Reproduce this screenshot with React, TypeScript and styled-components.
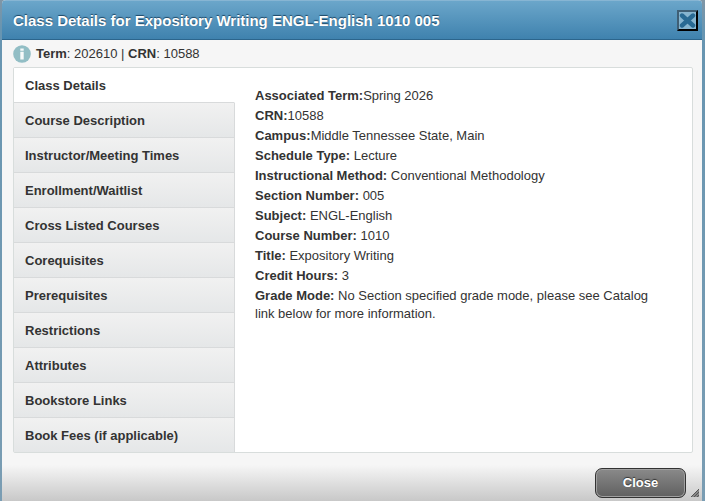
import React, { useState } from "react";
import styled, { createGlobalStyle } from "styled-components";

const GlobalStyle = createGlobalStyle`
  *, *::before, *::after { box-sizing: border-box; }
  html, body, #root { height: 100%; }
  body {
    margin: 0;
    background: #fff;
    color: #333;
    font: 13px/18px "Liberation Sans", Arial, sans-serif;
  }
`;

const Backdrop = styled.div`
  display: flex;
  min-height: 100%;
  margin-right: 1px;
  padding: 0 3px 0 2px;
  background: linear-gradient(#8096a6, #6795b1 30px, #7a9db3);
`;

const Dialog = styled.section`
  display: flex;
  flex: 1;
  flex-direction: column;
  min-width: 0;
  border-radius: 4px 4px 0 0;
  overflow: hidden;
  background: #f6f6f6;
`;

const TitleBar = styled.header`
  display: flex;
  align-items: center;
  justify-content: space-between;
  height: 40px;
  padding: 0 4px 0 11px;
  border-top: 1px solid #87b5d3;
  border-bottom: 1px solid #2c658c;
  background: linear-gradient(#6ba6ca, #3f82ae);
`;

const Title = styled.h1`
  margin: 0;
  padding-top: 2px;
  color: #fff;
  font-size: 15px;
  line-height: 18px;
  text-shadow: 0 -1px 1px #1d4664;
`;

const DismissButton = styled.button`
  display: flex;
  width: 21px;
  height: 21px;
  padding: 0;
  border: 2px solid;
  border-color: #3f5f75 #000 #000 #3f5f75;
  background: #86b5d0;
  cursor: pointer;
`;

const InfoRow = styled.div`
  display: flex;
  align-items: center;
  gap: 5px;
  height: 27px;
  padding: 0 11px;
`;

const Panel = styled.div`
  display: flex;
  margin: 0 9px 0 11px;
  border: 1px solid #d8dddc;
  border-radius: 2px;
  background: #fff;
`;

const TabList = styled.div`
  display: flex;
  flex: 0 0 221px;
  flex-direction: column;
`;

const Tab = styled.button<{ $active: boolean }>`
  height: 35px;
  padding: 2px 11px 0;
  border: 0 solid #d8dadb;
  border-width: 0 1px 1px 0;
  border-right-color: ${(p) => (p.$active ? "transparent" : "#d8dadb")};
  background: ${(p) => (p.$active ? "#fff" : "linear-gradient(#f1f1f1, #e5e7e8)")};
  color: #333;
  font: bold 13px/18px "Liberation Sans", Arial, sans-serif;
  text-align: left;
  cursor: pointer;

  &:last-child { border-bottom: 0; height: 34px; }
`;

const Details = styled.dl`
  display: flex;
  flex: 1;
  flex-direction: column;
  gap: 2px;
  min-width: 0;
  margin: 0;
  padding: 19px 32px 19px 20px;
`;

const Detail = styled.div`
  dt, dd { display: inline; margin: 0; }
  dt { font-weight: bold; }
`;

const Footer = styled.footer`
  display: flex;
  flex: 1;
  align-items: flex-end;
  justify-content: flex-end;
  gap: 4px;
  padding: 0 2px 3px 0;
  background: linear-gradient(#f6f6f6 12px, #c8c8c8);
`;

const CloseButton = styled.button`
  width: 91px;
  height: 30px;
  padding: 0 0 1px;
  border: 1px solid #333;
  border-radius: 7px;
  background: linear-gradient(#8a8a8a, #606060);
  box-shadow: inset 0 0 0 1px #a0a0a0;
  color: #fff;
  font: bold 13px/18px "Liberation Sans", Arial, sans-serif;
  text-shadow: 0 -1px 1px #333;
  cursor: pointer;
`;

const CrossIcon = () => (
  <svg width="17" height="17" viewBox="0 0 17 17" aria-hidden="true">
    <path d="M3 3.5L14 13.5M14 3.5L3 13.5" stroke="#286a94" strokeWidth="4.4" strokeLinecap="round" />
  </svg>
);

const InfoIcon = () => (
  <svg width="18" height="18" viewBox="0 0 18 18" aria-hidden="true">
    <circle cx="9" cy="9" r="8.8" fill="#92bec5" />
    <path d="M7.3 3.5h3.4v2.3H7.3zM7.3 6.8h3.4v7.7H7.3z" fill="#f6fafa" />
  </svg>
);

const ResizeGrip = () => (
  <svg width="10" height="10" viewBox="0 0 10 10" aria-hidden="true">
    <path d="M9 1v8H1z" fill="#888" />
    <path d="M1 9L9 1M4 9l5-5M7 9l2-2" stroke="#555" strokeWidth="1" />
  </svg>
);

const tabs = [
  "Class Details",
  "Course Description",
  "Instructor/Meeting Times",
  "Enrollment/Waitlist",
  "Cross Listed Courses",
  "Corequisites",
  "Prerequisites",
  "Restrictions",
  "Attributes",
  "Bookstore Links",
  "Book Fees (if applicable)",
];

const details: [string, string][] = [
  ["Associated Term:", "Spring 2026"],
  ["CRN:", "10588"],
  ["Campus:", "Middle Tennessee State, Main"],
  ["Schedule Type: ", "Lecture"],
  ["Instructional Method: ", "Conventional Methodology"],
  ["Section Number: ", "005"],
  ["Subject: ", "ENGL-English"],
  ["Course Number: ", "1010"],
  ["Title: ", "Expository Writing"],
  ["Credit Hours: ", "3"],
  ["Grade Mode: ", "No Section specified grade mode, please see Catalog link below for more information."],
];

export default function App() {
  const [active, setActive] = useState(0);
  return (
    <>
      <GlobalStyle />
      <Backdrop>
        <Dialog role="dialog" aria-labelledby="dialog-title">
          <TitleBar>
            <Title id="dialog-title">Class Details for Expository Writing ENGL-English 1010 005</Title>
            <DismissButton type="button" aria-label="Dismiss">
              <CrossIcon />
            </DismissButton>
          </TitleBar>
          <InfoRow>
            <InfoIcon />
            <span>
              <b>Term</b>: 202610 | <b>CRN</b>: 10588
            </span>
          </InfoRow>
          <Panel>
            <TabList role="tablist" aria-orientation="vertical">
              {tabs.map((label, i) => (
                <Tab
                  key={label}
                  type="button"
                  role="tab"
                  aria-selected={i === active}
                  $active={i === active}
                  onClick={() => setActive(i)}
                >
                  {label}
                </Tab>
              ))}
            </TabList>
            <Details>
              {details.map(([term, value]) => (
                <Detail key={term}>
                  <dt>{term}</dt>
                  <dd>{value}</dd>
                </Detail>
              ))}
            </Details>
          </Panel>
          <Footer>
            <CloseButton type="button">Close</CloseButton>
            <ResizeGrip />
          </Footer>
        </Dialog>
      </Backdrop>
    </>
  );
}
